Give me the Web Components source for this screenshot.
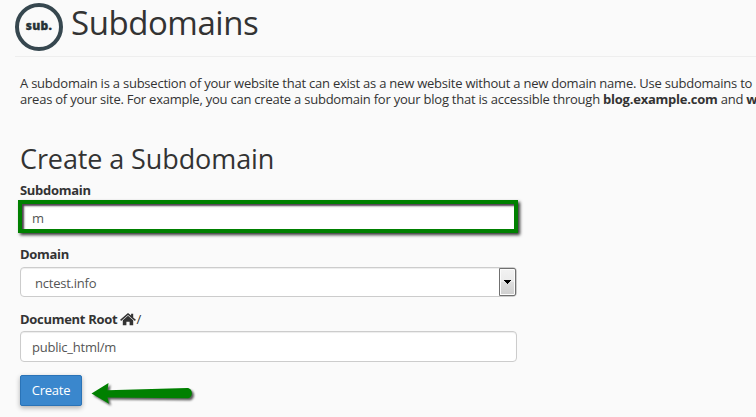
<!DOCTYPE html>
<html lang="en">
<head>
<meta charset="utf-8">
<title>Subdomains</title>
<style>
  html, body {
    margin: 0;
    height: 100%;
    overflow: hidden;
  }
  body {
    background: #fafafa;
    color: #333;
    font: 13px/16px "Open Sans", "Noto Sans", sans-serif;
    letter-spacing: -0.23px;
  }
</style>
</head>
<body>
<subdomains-page></subdomains-page>

<script>
class PageHeader extends HTMLElement {
  constructor() {
    super();
    this.attachShadow({ mode: 'open' });
    this.shadowRoot.innerHTML = `
      <style>
        :host {
          display: flex;
          box-sizing: border-box;
          height: 57px;
          margin-left: 15px;
          padding-top: 3px;
          gap: 8px;
          border-bottom: 1px solid #eee;
        }
        .badge {
          box-sizing: border-box;
          flex: none;
          width: 48px;
          height: 48px;
          border: 4px solid #36474f;
          border-radius: 50%;
          color: #263238;
          font: 800 12px/38px "Open Sans", sans-serif;
          letter-spacing: 0.3px;
          text-align: center;
          -webkit-text-stroke: 0.3px #263238;
        }
        h1 {
          margin: 0;
          font-size: 33px;
          font-weight: 400;
          letter-spacing: -0.45px;
          line-height: 40px;
          white-space: nowrap;
        }
      </style>
      <div class="badge">sub.</div>
      <h1><slot></slot></h1>
    `;
  }
}

class FormField extends HTMLElement {
  constructor() {
    super();
    this.attachShadow({ mode: 'open' });
    this.shadowRoot.innerHTML = `
      <style>
        :host {
          display: flex;
          flex-direction: column;
          width: 497px;
        }
        .label {
          display: flex;
          height: 16px;
          margin-bottom: 5px;
          font-weight: 700;
          letter-spacing: -0.3px;
          white-space: pre;
        }
      </style>
      <div class="label"><span>${this.getAttribute('label')}</span><slot name="after"></slot></div>
      <slot></slot>
    `;
  }
}

class TextBox extends HTMLElement {
  constructor() {
    super();
    this.attachShadow({ mode: 'open' });
    this.shadowRoot.innerHTML = `
      <style>
        :host {
          display: flex;
          align-items: center;
          box-sizing: border-box;
          height: 31px;
          padding: 0 11px;
          border: 1px solid #ccc;
          border-radius: 4px;
          background: #fff;
          box-shadow: inset 0 1px 1px rgba(0, 0, 0, .075);
          color: #555;
        }
        /* marker frame drawn around the field */
        :host([marked]) {
          height: 33px;
          margin: -3px -1px 1px -2px;
          padding: 2px 9px 0 10px;
          border: 4px solid #008000;
          border-radius: 0;
          box-shadow: 2px 2px 3px rgba(0, 0, 0, .8), inset 2px 2px 2px rgba(20, 0, 20, .75);
        }
      </style>
      <slot></slot>
    `;
  }
}

class SelectBox extends HTMLElement {
  constructor() {
    super();
    this.attachShadow({ mode: 'open' });
    this.shadowRoot.innerHTML = `
      <style>
        :host {
          display: flex;
          align-items: stretch;
          justify-content: space-between;
          box-sizing: border-box;
          height: 30px;
          border: 1px solid #ccc;
          border-radius: 4px;
          background: #fff;
          box-shadow: inset 0 1px 1px rgba(0, 0, 0, .075);
          color: #555;
        }
        .value {
          align-self: center;
          padding: 2px 0 0 14px;
        }
        .arrow {
          display: flex;
          align-items: center;
          justify-content: center;
          box-sizing: border-box;
          width: 17px;
          border: 1px solid #707070;
          border-radius: 0 2px 2px 0;
          background: linear-gradient(#f2f2f2, #ebebeb 48%, #ddd 52%, #cfcfcf);
          box-shadow: inset 0 0 0 1px #fcfcfc;
        }
      </style>
      <span class="value"><slot></slot></span>
      <span class="arrow">
        <svg width="7" height="4" shape-rendering="crispEdges"><path d="M0 0h7v1h-1v1h-1v1h-1v1h-1v-1h-1v-1h-1v-1h-1z"/></svg>
      </span>
    `;
  }
}

class HomeIcon extends HTMLElement {
  constructor() {
    super();
    this.attachShadow({ mode: 'open' });
    this.shadowRoot.innerHTML = `
      <style>
        :host { display: block; width: 16px; height: 16px; white-space: normal; }
        svg { display: block; }
      </style>
      <svg width="16" height="16" viewBox="0 0 16 16" fill="#333">
        <path d="M8 4.800 13.200 9.300v5H9.600V10.800H6.400v3.500H2.800v-5z"/>
        <path d="M8 1.900 11.100 4.600V2.700h2.100v3.700L15.900 8.800l-1 1.200L8 4 1.100 10 .1 8.800z"/>
      </svg>
    `;
  }
}

class PrimaryButton extends HTMLElement {
  constructor() {
    super();
    this.attachShadow({ mode: 'open' });
    this.shadowRoot.innerHTML = `
      <style>
        :host { display: block; }
        button {
          display: block;
          box-sizing: border-box;
          width: 62px;
          height: 31px;
          padding: 0 0 2px;
          border: 1px solid #2a73b7;
          border-radius: 2px;
          background: #3a87cd;
          box-shadow: 0 2px 5px rgba(0, 0, 0, .3);
          color: #fff;
          font: inherit;
          letter-spacing: inherit;
        }
      </style>
      <button><slot></slot></button>
    `;
  }
}

class GreenArrow extends HTMLElement {
  constructor() {
    super();
    this.attachShadow({ mode: 'open' });
    this.shadowRoot.innerHTML = `
      <style>
        :host { display: block; }
        svg {
          display: block;
          overflow: visible;
          filter: drop-shadow(2px 2px 1px rgba(0, 0, 0, .65));
        }
      </style>
      <svg width="102" height="22" viewBox="0 0 102 22" fill="#008000">
        <path d="M-.5 10.500 16.500 0 15.500 7.200 95 5C101.500 5 101.500 15.300 95 15.300L15.500 14.500 17 20.800z"/>
      </svg>
    `;
  }
}

class SubdomainsPage extends HTMLElement {
  constructor() {
    super();
    this.attachShadow({ mode: 'open' });
    this.shadowRoot.innerHTML = `
      <style>
        :host {
          display: block;
          width: 756px;
          height: 417px;
          overflow: hidden;
        }
        main { padding: 18px 0 0 20px; }
        p {
          margin: 0;
          white-space: nowrap;
        }
        h2 {
          margin: 32px 0 0;
          font-size: 27px;
          font-weight: 400;
          letter-spacing: -0.1px;
          line-height: 39px;
        }
        .subdomain { margin-top: 4px; }
        .domain { margin-top: 12px; }
        .root { margin-top: 14px; }
        .root text-box { margin-top: -1px; }
        .slash { font-weight: 400; }
        .actions {
          display: flex;
          align-items: center;
          gap: 10px;
          margin-top: 13px;
        }
        green-arrow { padding-top: 6px; }
      </style>
      <page-header>Subdomains</page-header>
      <main>
        <p>A subdomain is a subsection of your website that can exist as a new website without a new domain name. Use subdomains to<br>
          areas of your site. For example, you can create a subdomain for your blog that is accessible through <b>blog.example.com</b> and <b>w</b></p>
        <h2>Create a Subdomain</h2>
        <form-field class="subdomain" label="Subdomain">
          <text-box marked>m</text-box>
        </form-field>
        <form-field class="domain" label="Domain">
          <select-box>nctest.info</select-box>
        </form-field>
        <form-field class="root" label="Document Root ">
          <home-icon slot="after"></home-icon>
          <span slot="after" class="slash">/</span>
          <text-box>public_html/m</text-box>
        </form-field>
        <div class="actions">
          <primary-button>Create</primary-button>
          <green-arrow></green-arrow>
        </div>
      </main>
    `;
  }
}

customElements.define('page-header', PageHeader);
customElements.define('text-box', TextBox);
customElements.define('select-box', SelectBox);
customElements.define('home-icon', HomeIcon);
customElements.define('form-field', FormField);
customElements.define('primary-button', PrimaryButton);
customElements.define('green-arrow', GreenArrow);
customElements.define('subdomains-page', SubdomainsPage);
</script>
</body>
</html>
